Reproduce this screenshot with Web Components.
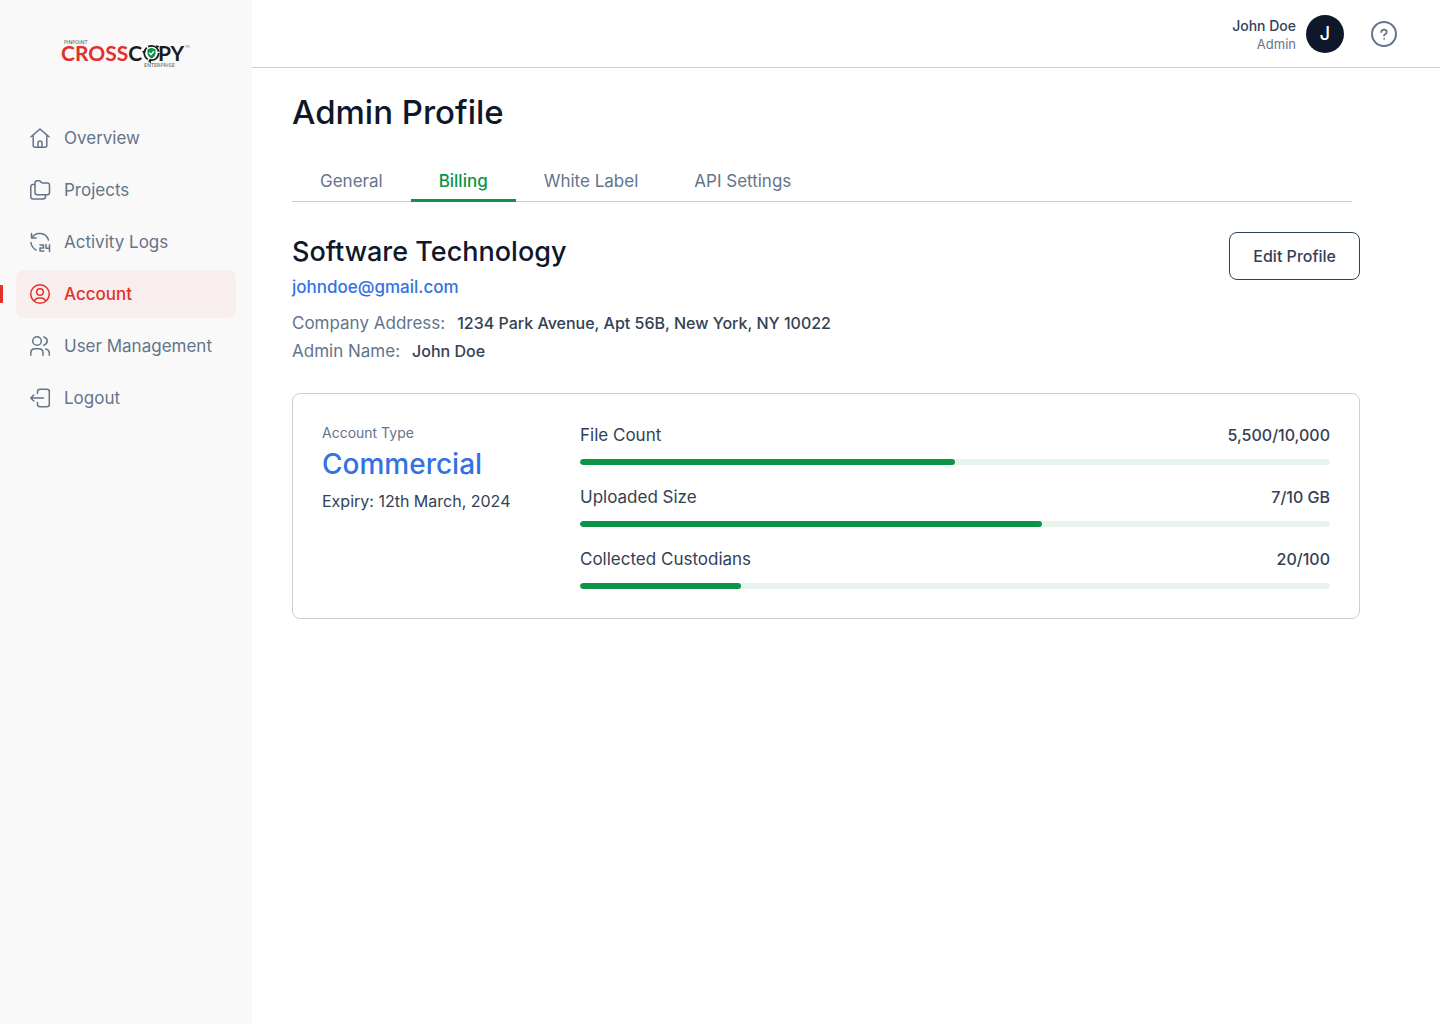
<!DOCTYPE html>
<html lang="en">
<head>
<meta charset="utf-8">
<title>Admin Profile</title>
<style>
body{margin:0;font-family:Inter,"Noto Sans",sans-serif;font-size:16px;line-height:24px;color:#334155;background:#fff}
</style>
</head>
<body>
<app-shell>
  <side-bar slot="side">
    <nav-item icon="home">Overview</nav-item>
    <nav-item icon="folders">Projects</nav-item>
    <nav-item icon="activity">Activity Logs</nav-item>
    <nav-item icon="account" active>Account</nav-item>
    <nav-item icon="users">User Management</nav-item>
    <nav-item icon="logout">Logout</nav-item>
  </side-bar>
  <top-bar slot="top" name="John Doe" role-name="Admin"></top-bar>
  <profile-page></profile-page>
</app-shell>
<script>
const define = (name, html) => customElements.define(name, class extends HTMLElement {
  connectedCallback() {
    if (this.shadowRoot) return;
    this.attachShadow({ mode: 'open' }).innerHTML = '<style>*,:host{box-sizing:border-box}</style>' + (typeof html === 'function' ? html(this) : html);
  }
});

const icons = {
  home: '<path d="M3 10.800 12 3l9 7.800M5.200 9v10.300q0 2 2 2h9.600q2 0 2-2V9M10 21.300V17q0-2 2-2t2 2v4.300"/>',
  folders: '<path d="M9.200 2.800h2.100q.7 0 1.200.6l1 1.200q.4.500 1.200.5h4.600q2.200 0 2.200 2.200v7.300q0 2.200-2.200 2.200H9.200Q7 16.800 7 14.600V5q0-2.200 2.200-2.200ZM7 6.500H5q-2.200 0-2.200 2.200v10.100Q2.800 21 5 21h10.200q2.200 0 2.200-2.200V17"/>',
  activity: '<path d="M3.500 3.500V8h4.500M3.700 7.800A9.300 9.300 0 0 1 20.500 10M3 12.500q.6 5 5 7.500"/><path d="M12 15h3.500v3H12v3h3.800M18 14.800v3.500h3.500M21.500 14.800v6.700"/>',
  account: '<circle cx="12" cy="12" r="9.300"/><circle cx="12" cy="10" r="3.300"/><path d="M6.300 19q1.600-3 4.300-3h2.800q2.700 0 4.300 3"/>',
  users: '<circle cx="9" cy="7" r="4.300"/><path d="M2.800 21.300V19q0-4.300 4.300-4.300h3.600q4.300 0 4.300 4.300v2.300M15.800 3q3.400 1 3.400 4t-3.400 4.200M17.800 14.900q3.500.8 3.500 4.600v1.800"/>',
  logout: '<path d="M9.500 7.500V5.700q0-2.500 2.500-2.500h6.800q2.500 0 2.500 2.500v12.600q0 2.500-2.500 2.500H12q-2.500 0-2.500-2.500v-1.800M15.500 12H2.800M5.800 9l-3 3 3 3"/>'
};

define('app-shell', `<style>
:host{display:flex;min-height:100vh}
aside{flex:0 0 252px;background:#f9f9f9}
.body{flex:1;min-width:0;display:flex;flex-direction:column}
</style><aside><slot name="side"></slot></aside><div class="body"><slot name="top"></slot><main><slot></slot></main></div>`);

define('brand-logo', `<style>
:host{display:flex;justify-content:center}
svg{display:block;font-family:Lato,sans-serif}
.tag{font-family:"DejaVu Sans",sans-serif;font-size:5px;fill:#555}
</style><svg width="130" height="30" viewBox="0 0 130 30" role="img" aria-label="Pinpoint CrossCopy Enterprise">
<text class="tag" x="3" y="5">PINPOINT</text>
<text x="0" y="22" font-size="21" font-weight="700" fill="#e4302b">CROSS<tspan fill="#1c1c1c">C</tspan></text>
<text x="97" y="22" font-size="21" font-weight="700" fill="#1c1c1c">PY</text>
<text x="124" y="9" font-size="3" fill="#777">TM</text>
<text class="tag" x="83" y="28">ENTERPRISE</text>
<circle cx="90.500" cy="14" r="7.200" fill="#fff" stroke="#1c1c1c" stroke-width="1.800" stroke-dasharray="13.500 1.580"/>
<path d="m81 12 3.500 0-1.500 3zM95 6l3.500 1.500-3 2zM90 19.500v5l-3-2.500z" fill="#1c1c1c"/>
<path d="m90.500 8.800 4 1.500v3.500q0 4-4 5.700-4-1.700-4-5.700v-3.500z" fill="#0b9446"/>
<path d="m88.300 13.800 1.700 1.900 2.800-3.500" fill="none" stroke="#fff" stroke-width="1.400"/>
</svg>`);

define('side-bar', `<style>
:host{display:block;padding:39px 16px 0}
nav{display:flex;flex-direction:column;gap:4px;margin-top:45px}
</style><brand-logo></brand-logo><nav aria-label="Main"><slot></slot></nav>`);

define('nav-item', el => `<style>
:host{display:block;position:relative;color:#64748b}
a{display:flex;align-items:center;gap:12px;height:48px;padding:0 12px;border-radius:8px;color:inherit;text-decoration:none;font-size:17px}
svg{flex:none}
:host([active]){color:#e4302b;font-weight:500}
:host([active]) a{background:#f8eeed}
:host([active])::before{content:"";position:absolute;left:-16px;top:15px;width:3px;height:18px;background:#e4302b;border-radius:0 1px 1px 0}
</style><a href="#"${el.hasAttribute('active') ? ' aria-current="page"' : ''}><svg width="24" height="24" viewBox="0 0 24 24" fill="none" stroke="currentColor" stroke-width="1.500" stroke-linecap="round" stroke-linejoin="round" aria-hidden="true">${icons[el.getAttribute('icon')]}</svg><span><slot></slot></span></a>`);

define('top-bar', el => `<style>
:host{display:flex;justify-content:flex-end;align-items:center;height:68px;padding:0 42px;border-bottom:1px solid #cfcfcf}
.who{text-align:right;font-size:13px;line-height:16px;color:#64748b;margin-right:10px}
.who b{display:block;font-size:14px;line-height:20px;font-weight:500;color:#334155}
.avatar{width:38px;height:38px;border-radius:50%;background:#0f172a;color:#fff;display:grid;place-items:center;font-size:18px;font-weight:500;margin-right:26px}
button{display:block;padding:0;border:0;background:none;color:#64748b}
svg{display:block}
</style><div class="who"><b>${el.getAttribute('name')}</b>${el.getAttribute('role-name')}</div>
<div class="avatar">J</div>
<button type="button" aria-label="Help"><svg width="28" height="28" viewBox="0 0 28 28" fill="none" stroke="currentColor" stroke-width="2" stroke-linecap="round"><circle cx="14" cy="14" r="12"/><path d="M11.300 12q.2-2.400 2.700-2.400 2.700 0 2.700 2.300 0 1.500-1.400 2.200-1.200.6-1.200 1.500" stroke-width="1.800"/><circle cx="14" cy="18.800" r=".5" stroke-width="1"/></svg></button>`);

define('tab-bar', `<style>
:host{display:flex;margin-right:8px;border-bottom:1px solid #cfcfcf}
</style><slot></slot>`);

define('tab-link', `<style>
:host{display:block;margin-bottom:-1px}
a{display:block;padding:8px 28px 6px;border-bottom:3px solid transparent;color:#64748b;text-decoration:none;font-size:17px;line-height:24px}
:host([active]) a{color:#0b9446;border-color:#0b9446;font-weight:500}
</style><a href="#"><slot></slot></a>`);

define('info-line', el => `<style>
:host{display:flex;gap:12px;font-size:16px;line-height:28px}
span{color:#64748b;font-size:17px}
b{font-weight:500}
</style><span>${el.getAttribute('label')}</span><b><slot></slot></b>`);

define('usage-meter', el => `<style>
:host{display:block}
.row{display:flex;justify-content:space-between;font-size:16px;line-height:24px}
span{font-size:17px}
b{font-weight:500}
.track{height:6px;margin-top:12px;border-radius:3px;background:#e7f4ec;overflow:hidden}
.fill{height:100%;border-radius:3px;background:#0b9446;width:${el.getAttribute('percent')}%}
</style><div class="row"><span>${el.getAttribute('label')}</span><b>${el.getAttribute('value')}</b></div>
<div class="track" role="progressbar" aria-label="${el.getAttribute('label')}" aria-valuenow="${el.getAttribute('percent')}"><div class="fill"></div></div>`);

define('plan-card', `<style>
:host{display:flex;border:1px solid #cfcfcf;border-radius:8px;padding:29px}
.plan{flex:0 0 258px}
small{display:block;font-size:14px;line-height:20px;color:#64748b}
strong{display:block;font-size:28px;line-height:40px;font-weight:500;color:#3472e3;margin:1px 0 5px}
.plan span{display:block;font-size:16px;line-height:24px}
.usage{flex:1;display:flex;flex-direction:column;gap:20px}
</style><div class="plan"><small>Account Type</small><strong>Commercial</strong><span>Expiry: 12th March, 2024</span></div>
<div class="usage">
<usage-meter label="File Count" value="5,500/10,000" percent="50"></usage-meter>
<usage-meter label="Uploaded Size" value="7/10 GB" percent="61.600"></usage-meter>
<usage-meter label="Collected Custodians" value="20/100" percent="21.500"></usage-meter>
</div>`);

define('profile-page', `<style>
:host{display:block;padding:20px 80px 40px 40px}
h1{margin:0 0 25px;font-size:33px;line-height:48px;font-weight:500;color:#0f172a}
h2{margin:0;font-size:27px;line-height:40px;font-weight:500;color:#0f172a}
section{display:flex;justify-content:space-between;align-items:flex-start;margin:30px 0 28px}
.mail{display:block;margin:3px 0 10px;color:#3472e3;font-weight:500;text-decoration:none;font-size:17px;line-height:24px}
button{height:48px;padding:0 23px;border:1px solid #334155;border-radius:8px;background:#fff;color:#334155;font:500 16px/24px Inter,sans-serif}
</style>
<h1>Admin Profile</h1>
<tab-bar><tab-link>General</tab-link><tab-link active>Billing</tab-link><tab-link>White Label</tab-link><tab-link>API Settings</tab-link></tab-bar>
<section><div><h2>Software Technology</h2><a class="mail" href="mailto:johndoe@gmail.com">johndoe@gmail.com</a>
<info-line label="Company Address:">1234 Park Avenue, Apt 56B, New York, NY 10022</info-line>
<info-line label="Admin Name:">John Doe</info-line></div>
<button type="button">Edit Profile</button></section>
<plan-card></plan-card>`);
</script>
</body>
</html>
